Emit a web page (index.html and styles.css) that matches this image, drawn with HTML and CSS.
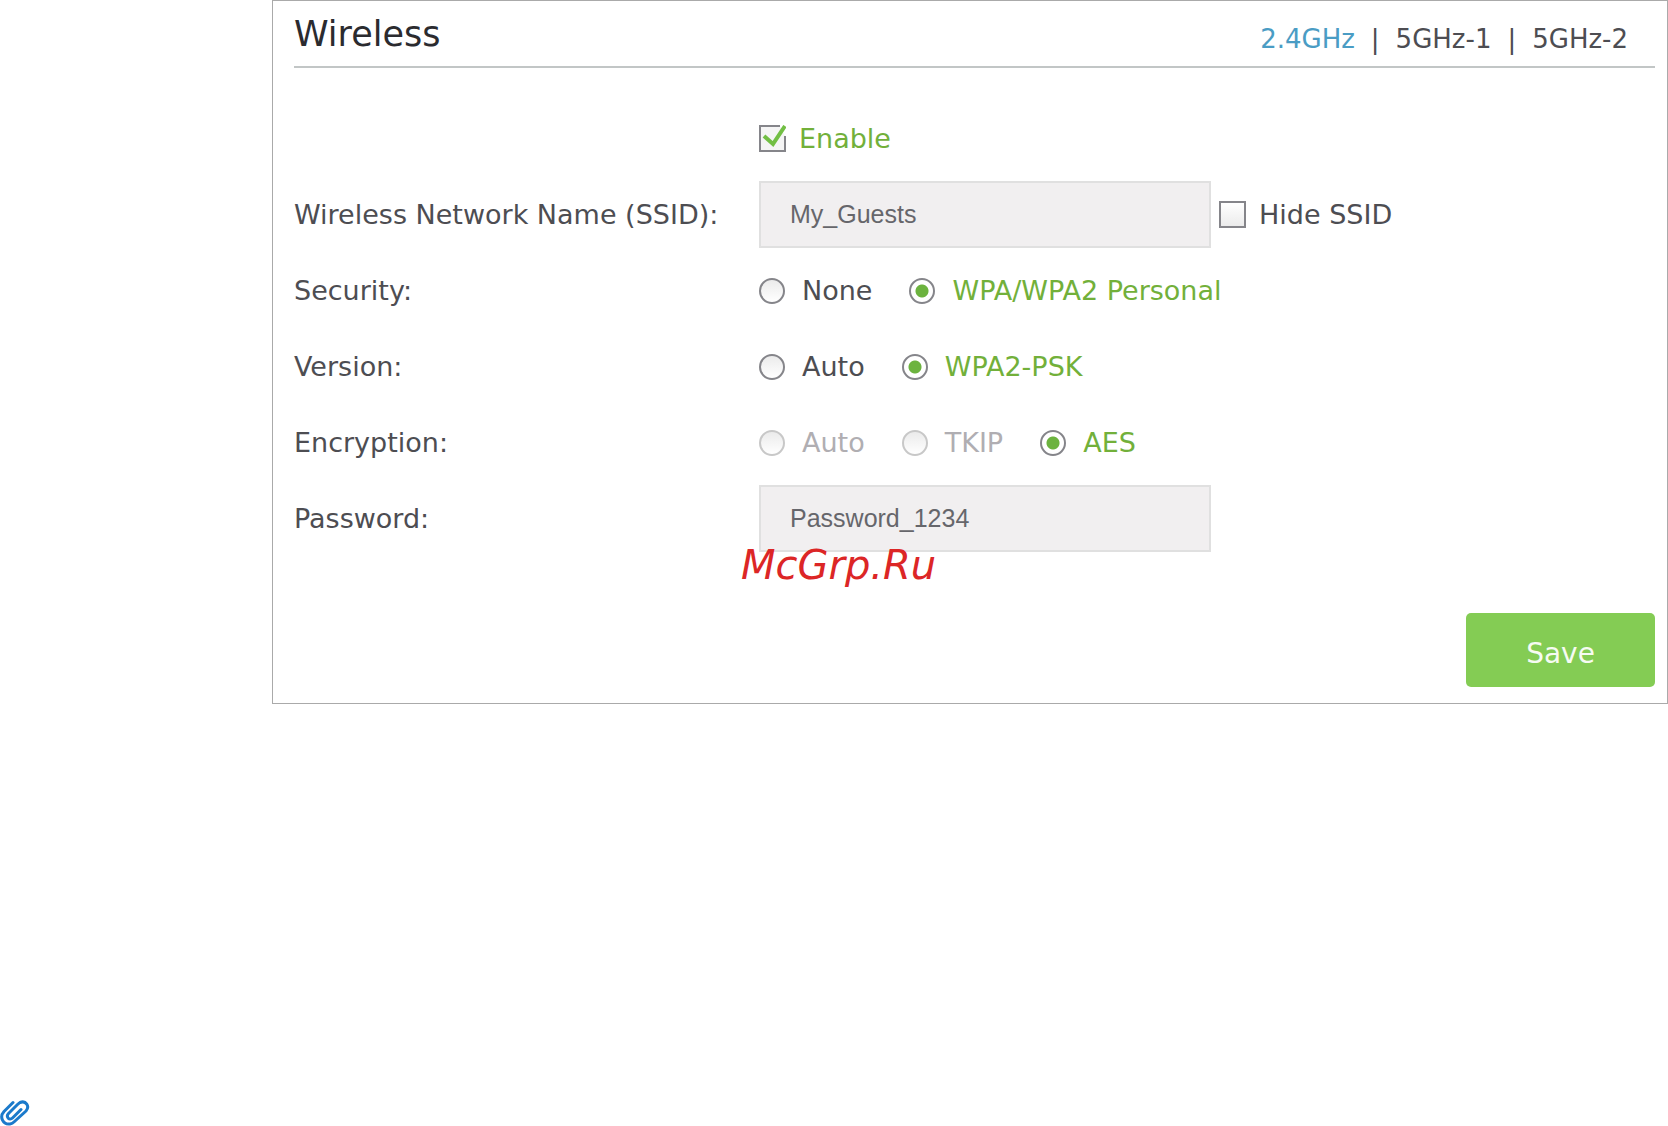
FILE: index.html
```
<!DOCTYPE html>
<html lang="en">
<head>
    <meta charset="UTF-8">
    <meta name="viewport" content="width=device-width, initial-scale=1.0">
    <title>Wireless</title>
    <link rel="stylesheet" href="styles.css">
</head>
<body>
    <form class="panel">
        <div class="header">
            <h1>Wireless</h1>
            <nav class="bands">
                <a class="active" href="#">2.4GHz</a>
                <span>|</span>
                <a href="#">5GHz-1</a>
                <span>|</span>
                <a href="#">5GHz-2</a>
            </nav>
        </div>

        <div class="rows">
            <div class="row">
                <span class="name"></span>
                <label class="check"><input type="checkbox" checked><span>Enable</span></label>
            </div>
            <div class="row">
                <label class="name" for="ssid">Wireless Network Name (SSID):</label>
                <input class="text" type="text" id="ssid" value="My_Guests">
                <label class="check"><input type="checkbox"><span>Hide SSID</span></label>
            </div>
            <div class="row" role="radiogroup" aria-labelledby="security">
                <span class="name" id="security">Security:</span>
                <div class="options">
                    <label class="radio"><input type="radio" name="security"><span>None</span></label>
                    <label class="radio"><input type="radio" name="security" checked><span>WPA/WPA2 Personal</span></label>
                </div>
            </div>
            <div class="row" role="radiogroup" aria-labelledby="version">
                <span class="name" id="version">Version:</span>
                <div class="options">
                    <label class="radio"><input type="radio" name="version"><span>Auto</span></label>
                    <label class="radio"><input type="radio" name="version" checked><span>WPA2-PSK</span></label>
                </div>
            </div>
            <div class="row" role="radiogroup" aria-labelledby="encryption">
                <span class="name" id="encryption">Encryption:</span>
                <div class="options">
                    <label class="radio"><input type="radio" name="encryption" disabled><span>Auto</span></label>
                    <label class="radio"><input type="radio" name="encryption" disabled><span>TKIP</span></label>
                    <label class="radio"><input type="radio" name="encryption" checked><span>AES</span></label>
                </div>
            </div>
            <div class="row">
                <label class="name" for="password">Password:</label>
                <div class="field">
                    <input class="text" type="text" id="password" value="Password_1234">
                    <span class="watermark">McGrp.Ru</span>
                </div>
            </div>
        </div>

        <div class="actions">
            <button type="button">Save</button>
        </div>
    </form>

    <svg class="clip" width="30" height="26" viewBox="0 0 30 26" fill="none" stroke="#1b7acb" stroke-width="3" stroke-linecap="round" stroke-linejoin="round">
        <path d="M13 2.5 L4 11.5 C-1 17 3 25 10 24 C12 23.700 13 23 14.500 21.500 L26 11 C30 6.500 26 0 20 2.500 C19 3 18.500 3.500 17.500 4.500 L8.500 13.500 C5.500 17 9.500 21 12.500 18 L21 9.500"/>
    </svg>
</body>
</html>
```
FILE: styles.css
```
body {
    margin: 0;
    min-height: 100vh;
    display: flex;
    flex-direction: column;
    font-family: "DejaVu Sans", Verdana, sans-serif;
    font-size: 26px;
    color: #4d4d52;
    background-color: white;
}
.panel {
    margin-left: 272px;
    padding: 0 12px 16px 21px;
    border: 1px solid #aaa;
}
.header {
    display: flex;
    justify-content: space-between;
    align-items: center;
    height: 65px;
    border-bottom: 2px solid #c2c6c6;
}
h1 {
    margin: 0;
    font-size: 35px;
    font-weight: normal;
    color: #2b2b2f;
}
.bands {
    display: flex;
    gap: 16px;
    padding: 10px 27px 0 0;
}
.bands a {
    color: inherit;
    text-decoration: none;
}
.bands a.active {
    color: #4a9cc4;
}
.rows {
    display: flex;
    flex-direction: column;
    gap: 9px;
    padding-top: 37px;
    font-size: 27px;
}
.row {
    display: flex;
    align-items: center;
    height: 67px;
}
.name {
    width: 465px;
}
.text {
    box-sizing: border-box;
    width: 452px;
    height: 67px;
    padding: 0 29px;
    border: 2px solid #e0e0e0;
    background-color: #f1eff0;
    color: #66666b;
    font-family: "Liberation Sans", Arial, sans-serif;
    font-size: 25px;
}
.field {
    position: relative;
}
.check,
.radio {
    display: flex;
    align-items: center;
}
.check {
    gap: 13px;
}
.text + .check {
    margin-left: 8px;
}
.options {
    display: flex;
    gap: 37px;
}
.radio {
    gap: 17px;
}
.check input,
.radio input {
    appearance: none;
    box-sizing: border-box;
    margin: 0;
    border: 2px solid #85858a;
    background: linear-gradient(#ebebeb, #fff);
}
.check input {
    width: 27px;
    height: 27px;
    background: linear-gradient(#fff, #ebebeb);
}
.check input:checked {
    border: none;
    background: url("data:image/svg+xml,%3Csvg xmlns='http://www.w3.org/2000/svg' viewBox='0 0 27 27' fill='none'%3E%3Cpath d='M21 1H1v25h25V11' fill='%23f5f5f5' stroke='%2385858a' stroke-width='2'/%3E%3Cpath d='M5 11l9 8L26 1' stroke='%2372bf44' stroke-width='4'/%3E%3C/svg%3E");
}
.radio input {
    width: 26px;
    height: 26px;
    border-radius: 50%;
}
.radio input:checked {
    background: radial-gradient(circle, #6cb33f 6px, #fff 7px);
}
.radio input:disabled {
    border-color: #c8c8c8;
}
input:checked + span {
    color: #72b03a;
}
input:disabled + span {
    color: #b0aeb2;
}
.watermark {
    position: absolute;
    left: -18px;
    top: 57px;
    font-size: 40px;
    font-style: oblique;
    color: #dc2626;
}
.actions {
    display: flex;
    justify-content: flex-end;
    padding-top: 61px;
}
button {
    width: 189px;
    height: 74px;
    padding: 6px 0 0;
    border: none;
    border-radius: 5px;
    background-color: #84cc54;
    color: #f6fbf2;
    font-family: inherit;
    font-size: 28px;
    cursor: pointer;
}
.clip {
    margin-top: auto;
}
```
